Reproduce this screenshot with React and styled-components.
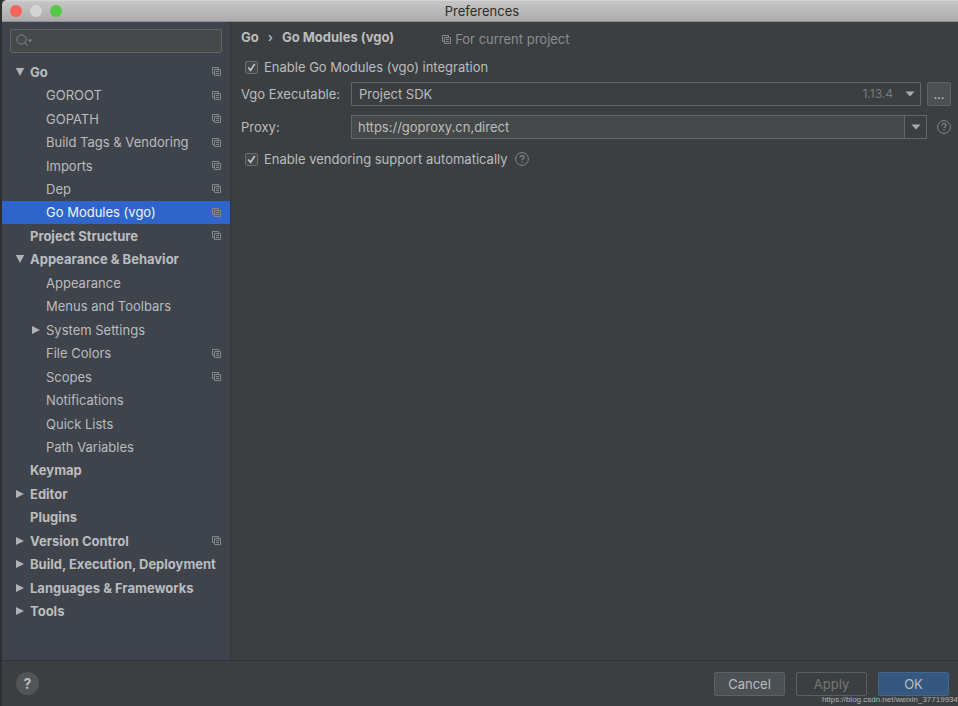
import React, { useState } from 'react';
import styled, { createGlobalStyle } from 'styled-components';

const GlobalStyle = createGlobalStyle`
  * {
    box-sizing: border-box;
  }
  body {
    margin: 0;
    background: #3c3f41;
  }
  body, button, input, select {
    font-family: Inter, "Liberation Sans", sans-serif;
    font-size: 13px;
    line-height: 16px;
    color: #bbbdbf;
  }
`;

// window
const Window = styled.div`
  position: relative;
  display: flex;
  flex-direction: column;
  min-height: 100vh;
  border-left: 2px solid #2b2e33;
`;

const TitleBar = styled.header`
  position: relative;
  display: flex;
  align-items: center;
  justify-content: center;
  height: 22px;
  padding-left: 4px;
  background: linear-gradient(#c6c6c6, #acacac);
  border-top: 1px solid #d4d4d4;
  border-bottom: 1px solid #8e8f90;
  border-top-left-radius: 5px;
`;

const Title = styled.h1`
  margin: 0;
  font-size: 13px;
  font-weight: 400;
  color: #2c2c2c;
`;

const Lights = styled.div`
  position: absolute;
  left: 8px;
  top: 4px;
  display: flex;
  gap: 8px;
`;

const Light = styled.span`
  width: 12px;
  height: 12px;
  border-radius: 50%;
  background: ${props => props.$color};
`;

const Body = styled.div`
  display: flex;
  flex: 1;
`;

// sidebar
const Sidebar = styled.nav`
  flex: 0 0 229px;
  min-width: 0;
  padding-top: 7px;
  background: #3e434c;
  border-right: 1px solid #33363b;
`;

const Search = styled.label`
  display: flex;
  align-items: center;
  height: 24px;
  margin: 0 8px 7px;
  padding-left: 5px;
  background: #45494a;
  border: 1px solid #5f6467;
  border-radius: 2px;
  color: #84888a;
`;

const SearchInput = styled.input`
  flex: 1;
  min-width: 0;
  border: 0;
  outline: 0;
  background: transparent;
`;

const Tree = styled.ul`
  display: flex;
  flex-direction: column;
  min-height: 563px;
  margin: 0;
  padding: 0;
  list-style: none;
`;

const TreeItem = styled.li`
  display: flex;
  flex: 1;
`;

const TreeRow = styled.button`
  display: flex;
  align-items: center;
  width: 100%;
  padding: 0 9px 0 ${props => (props.$level ? 29 : 13)}px;
  border: 0;
  background: ${props => (props.$selected ? '#2f65ca' : 'transparent')};
  color: ${props => (props.$selected ? '#f0f3f8' : '#bbbdbf')};
  font-weight: ${props => (props.$level ? 400 : 700)};
  text-align: left;
  white-space: nowrap;
`;

const Arrow = styled.svg`
  flex: none;
  width: 10px;
  height: 10px;
  margin-right: 5px;
  fill: #b0b3b5;
`;

const TreeText = styled.span`
  flex: 1;
`;

// settings page
const Page = styled.main`
  flex: 1;
  min-width: 0;
  padding: 6px 7px 0 10px;
`;

const PageHead = styled.div`
  display: flex;
  align-items: center;
  gap: 48px;
  height: 18px;
  margin-bottom: 9px;
`;

const Crumbs = styled.h2`
  display: flex;
  gap: 9px;
  margin: 0;
  font-size: 13px;
  font-weight: 700;
`;

const Separator = styled.span`
  font-weight: 500;
`;

const Scope = styled.span`
  display: flex;
  align-items: center;
  gap: 4px;
  padding-top: 4px;
  color: #8b8e90;
`;

const CheckRow = styled.div`
  display: flex;
  align-items: center;
  gap: 7px;
  height: 24px;
`;

const CheckLabel = styled.label`
  display: flex;
  align-items: center;
  gap: 6px;
`;

const CheckBox = styled.input`
  appearance: none;
  width: 13px;
  height: 13px;
  margin: 0;
  background: #43494a;
  border: 1px solid #6b6e70;
  border-radius: 2px;

  &:not(:checked) + svg {
    display: none;
  }
`;

const CheckWrap = styled.span`
  position: relative;
  display: flex;
  margin-left: 4px;
`;

const CheckMark = styled.svg`
  position: absolute;
  inset: 0;
  pointer-events: none;
`;

const Field = styled.div`
  display: flex;
  align-items: center;
  height: 24px;
  margin: ${props => props.$margin};
`;

const FieldLabel = styled.label`
  flex: 0 0 110px;
`;

const SelectWrap = styled.div`
  position: relative;
  flex: 1;
  height: 24px;
  margin-right: 6px;
`;

const Select = styled.select`
  appearance: none;
  width: 100%;
  height: 100%;
  padding: 0 7px;
  background: #3c3f41;
  border: 1px solid #646769;
  border-radius: 1px;
`;

const SelectExtra = styled.span`
  position: absolute;
  top: 0;
  right: 6px;
  display: flex;
  align-items: center;
  gap: 12px;
  height: 24px;
  font-size: 12px;
  color: #777a7c;
  pointer-events: none;
`;

const MoreButton = styled.button`
  width: 24px;
  height: 24px;
  padding: 0;
  background: #4c5052;
  border: 1px solid #5e6163;
  border-radius: 2px;
`;

const Combo = styled.div`
  display: flex;
  flex: 1;
  height: 24px;
  margin-right: 10px;
  border: 1px solid #646769;
`;

const ComboInput = styled.input`
  flex: 1;
  min-width: 0;
  padding: 0 6px;
  border: 0;
  outline: 0;
  background: #45494a;
`;

const ComboButton = styled.button`
  display: flex;
  align-items: center;
  justify-content: center;
  width: 22px;
  padding: 0;
  border: 0;
  border-left: 1px solid #646769;
  background: #3c3f41;
`;

// footer
const Footer = styled.footer`
  display: flex;
  align-items: center;
  gap: 11px;
  height: 46px;
  padding: 0 9px 0 14px;
  border-top: 1px solid #313335;
`;

const HelpButton = styled.button`
  width: 23px;
  height: 23px;
  margin-right: auto;
  padding: 0;
  border: 0;
  border-radius: 50%;
  background: #515557;
  font-size: 14px;
  font-weight: 700;
`;

const Button = styled.button`
  width: 71px;
  height: 24px;
  padding: 0;
  background: ${props => (props.$primary ? '#365880' : '#4c5052')};
  border: 1px solid ${props => (props.$primary ? '#42678f' : '#5e6163')};
  border-radius: 2px;

  &:disabled {
    background: transparent;
    color: #777777;
  }
`;

const Watermark = styled.span`
  position: absolute;
  right: 0;
  bottom: 1px;
  font-family: "Liberation Sans", sans-serif;
  font-size: 8px;
  line-height: 10px;
  color: #b4b5b6;
`;

function ProjectIcon() {
  return (
    <svg width="9" height="9" viewBox="0 0 9 9" fill="none" stroke="#84898e">
      <path d="M2 6.5H.5v-6h6V2" />
      <path d="M2.5 2.5h6v6h-6zM4 4.5h3M4 6.5h3" />
    </svg>
  );
}

function HelpIcon() {
  return (
    <svg width="14" height="14" viewBox="0 0 14 14" fill="none" stroke="#85888a">
      <circle cx="7" cy="7" r="6.4" />
      <path d="M5 5.6C5 4.3 5.9 3.6 7 3.6s2 .7 2 1.8c0 1.3-2 1.5-2 2.9" strokeWidth="1.2" />
      <path d="M7 9.4v1.3" strokeWidth="1.3" />
    </svg>
  );
}

function DownIcon() {
  return (
    <svg width="10" height="6" viewBox="0 0 10 6" fill="#a9acae">
      <path d="M.5.5h9L5 5.5z" />
    </svg>
  );
}

function Check({ label, children }) {
  return (
    <CheckRow>
      <CheckLabel>
        <CheckWrap>
          <CheckBox type="checkbox" defaultChecked />
          <CheckMark width="13" height="13" viewBox="0 0 13 13" fill="none" stroke="#c0c2c3" strokeWidth="1.7">
            <path d="M3.2 6.5l2.4 2.8 4.2-6.4" />
          </CheckMark>
        </CheckWrap>
        {label}
      </CheckLabel>
      {children}
    </CheckRow>
  );
}

const items = [
  { text: 'Go', arrow: 'open', project: true },
  { text: 'GOROOT', level: 1, project: true },
  { text: 'GOPATH', level: 1, project: true },
  { text: 'Build Tags & Vendoring', level: 1, project: true },
  { text: 'Imports', level: 1, project: true },
  { text: 'Dep', level: 1, project: true },
  { text: 'Go Modules (vgo)', level: 1, project: true },
  { text: 'Project Structure', project: true },
  { text: 'Appearance & Behavior', arrow: 'open' },
  { text: 'Appearance', level: 1 },
  { text: 'Menus and Toolbars', level: 1 },
  { text: 'System Settings', level: 1, arrow: 'closed' },
  { text: 'File Colors', level: 1, project: true },
  { text: 'Scopes', level: 1, project: true },
  { text: 'Notifications', level: 1 },
  { text: 'Quick Lists', level: 1 },
  { text: 'Path Variables', level: 1 },
  { text: 'Keymap' },
  { text: 'Editor', arrow: 'closed' },
  { text: 'Plugins' },
  { text: 'Version Control', arrow: 'closed', project: true },
  { text: 'Build, Execution, Deployment', arrow: 'closed' },
  { text: 'Languages & Frameworks', arrow: 'closed' },
  { text: 'Tools', arrow: 'closed' },
];

function App() {
  const [selected, setSelected] = useState('Go Modules (vgo)');
  const [proxy, setProxy] = useState('https://goproxy.cn,direct');

  return (
    <Window>
      <GlobalStyle />
      <TitleBar>
        <Lights>
          <Light $color="#f9625a" />
          <Light $color="#d6d4d6" />
          <Light $color="#55c84a" />
        </Lights>
        <Title>Preferences</Title>
      </TitleBar>

      <Body>
        <Sidebar>
          <Search>
            <svg width="18" height="14" viewBox="0 0 18 14" fill="none" stroke="currentColor">
              <circle cx="5.5" cy="5.5" r="4.6" />
              <path d="M8.8 8.8l3 3.2" />
              <path d="M11.5 5.5h5L14 8z" fill="currentColor" stroke="none" />
            </svg>
            <SearchInput aria-label="Search" />
          </Search>
          <Tree>
            {items.map(item => (
              <TreeItem key={item.text}>
                <TreeRow
                  type="button"
                  $level={item.level}
                  $selected={item.text === selected}
                  onClick={() => setSelected(item.text)}
                >
                  <Arrow viewBox="0 0 10 10">
                    {item.arrow === 'open' && <path d="M.8 1h8.4L5 9z" />}
                    {item.arrow === 'closed' && <path d="M1 1l8 4-8 4z" />}
                  </Arrow>
                  <TreeText>{item.text}</TreeText>
                  {item.project && <ProjectIcon />}
                </TreeRow>
              </TreeItem>
            ))}
          </Tree>
        </Sidebar>

        <Page>
          <PageHead>
            <Crumbs>
              <span>Go</span>
              <Separator>›</Separator>
              <span>Go Modules (vgo)</span>
            </Crumbs>
            <Scope>
              <ProjectIcon />
              For current project
            </Scope>
          </PageHead>

          <Check label="Enable Go Modules (vgo) integration" />
          <Field $margin="3px 0 9px">
            <FieldLabel htmlFor="sdk">Vgo Executable:</FieldLabel>
            <SelectWrap>
              <Select id="sdk">
                <option>Project SDK</option>
              </Select>
              <SelectExtra>
                1.13.4
                <DownIcon />
              </SelectExtra>
            </SelectWrap>
            <MoreButton type="button">...</MoreButton>
          </Field>
          <Field $margin="0 0 8px">
            <FieldLabel htmlFor="proxy">Proxy:</FieldLabel>
            <Combo>
              <ComboInput id="proxy" value={proxy} onChange={e => setProxy(e.target.value)} />
              <ComboButton type="button" aria-label="Proxy list">
                <DownIcon />
              </ComboButton>
            </Combo>
            <HelpIcon />
          </Field>
          <Check label="Enable vendoring support automatically">
            <HelpIcon />
          </Check>
        </Page>
      </Body>

      <Footer>
        <HelpButton type="button">?</HelpButton>
        <Button type="button">Cancel</Button>
        <Button type="button" disabled>Apply</Button>
        <Button type="button" $primary>OK</Button>
      </Footer>
      <Watermark>https://blog.csdn.net/weixin_37719934</Watermark>
    </Window>
  );
}

export default App;
